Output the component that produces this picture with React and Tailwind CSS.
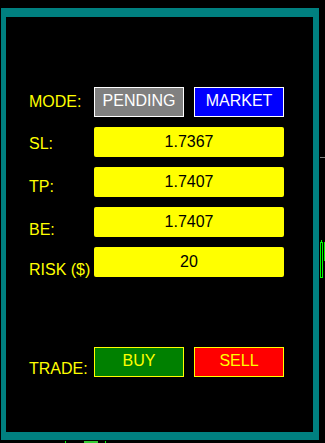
export default function App() {
  const fields = [
    { label: "SL:", value: "1.7367", offset: "mt-[7.5px]" },
    { label: "TP:", value: "1.7407", offset: "mt-[10.5px]" },
    { label: "BE:", value: "1.7407", offset: "mt-[13.5px]" },
    { label: "RISK ($)", value: "20", offset: "mt-[13.5px]" },
  ];

  return (
    <div className="relative w-[325px] h-[443px] bg-black overflow-hidden font-['Liberation_Sans',Arial,sans-serif] text-[16px] leading-[18px]">
      <div className="ml-px mt-2 w-[318px] h-[432px] border-t-[9px] border-l-[5px] border-r-[6px] border-b-[8px] border-[#008080] bg-black pt-[70px] pl-[23px]">
        <div className="flex flex-col gap-[10px]">
          {/* mode */}
          <div className="flex h-[30px] items-start">
            <div className="w-[65px] mt-[5.5px] text-[#ffff00] whitespace-nowrap">MODE:</div>
            <div className="flex gap-[10px]">
              <button className="w-[90px] h-[30px] border border-white bg-[#808080] text-white flex items-center justify-center pb-[2px]">
                PENDING
              </button>
              <button className="w-[90px] h-[30px] border border-white bg-[#0000ff] text-white flex items-center justify-center pb-[2px]">
                MARKET
              </button>
            </div>
          </div>

          {fields.map((f) => (
            <div key={f.label} className="flex h-[30px] items-start">
              <div className={`w-[65px] ${f.offset} text-[#ffff00] whitespace-nowrap`}>{f.label}</div>
              <div className="w-[190px] h-[30px] bg-[#ffff00] rounded-[2px] flex items-center justify-center text-black">
                {f.value}
              </div>
            </div>
          ))}
        </div>

        {/* trade */}
        <div className="flex h-[30px] items-start mt-[70px]">
          <div className="w-[65px] mt-[12.5px] text-[#ffff00] whitespace-nowrap">TRADE:</div>
          <div className="flex gap-[10px]">
            <button className="w-[90px] h-[30px] border border-[#ffff00] bg-[#008000] text-[#ffff00] flex items-center justify-center pb-[2px]">
              BUY
            </button>
            <button className="w-[90px] h-[30px] border border-[#ffff00] bg-[#ff0000] text-[#ffff00] flex items-center justify-center pb-[2px]">
              SELL
            </button>
          </div>
        </div>
      </div>

      {/* chart bits peeking out behind the panel */}
      <div className="absolute left-[320px] top-[157px] w-[5px] h-px bg-[#808080]" />
      <div className="absolute left-[321px] top-[240px] w-px h-[3px] bg-[#00ff00]" />
      <div className="absolute left-[320px] top-[242px] w-[3px] h-[36px] border border-[#00ff00]" />
      <div className="absolute left-[324px] top-[242px] w-px h-[19px] bg-[#00ff00]" />
      <div className="absolute left-[65px] top-[441px] w-px h-[2px] bg-[#00ff00]" />
      <div className="absolute left-[84px] top-[441px] w-[14px] h-[2px] bg-[#33cc33]" />
      <div className="absolute left-[105px] top-[441px] w-px h-[2px] bg-[#00ff00]" />
    </div>
  );
}
